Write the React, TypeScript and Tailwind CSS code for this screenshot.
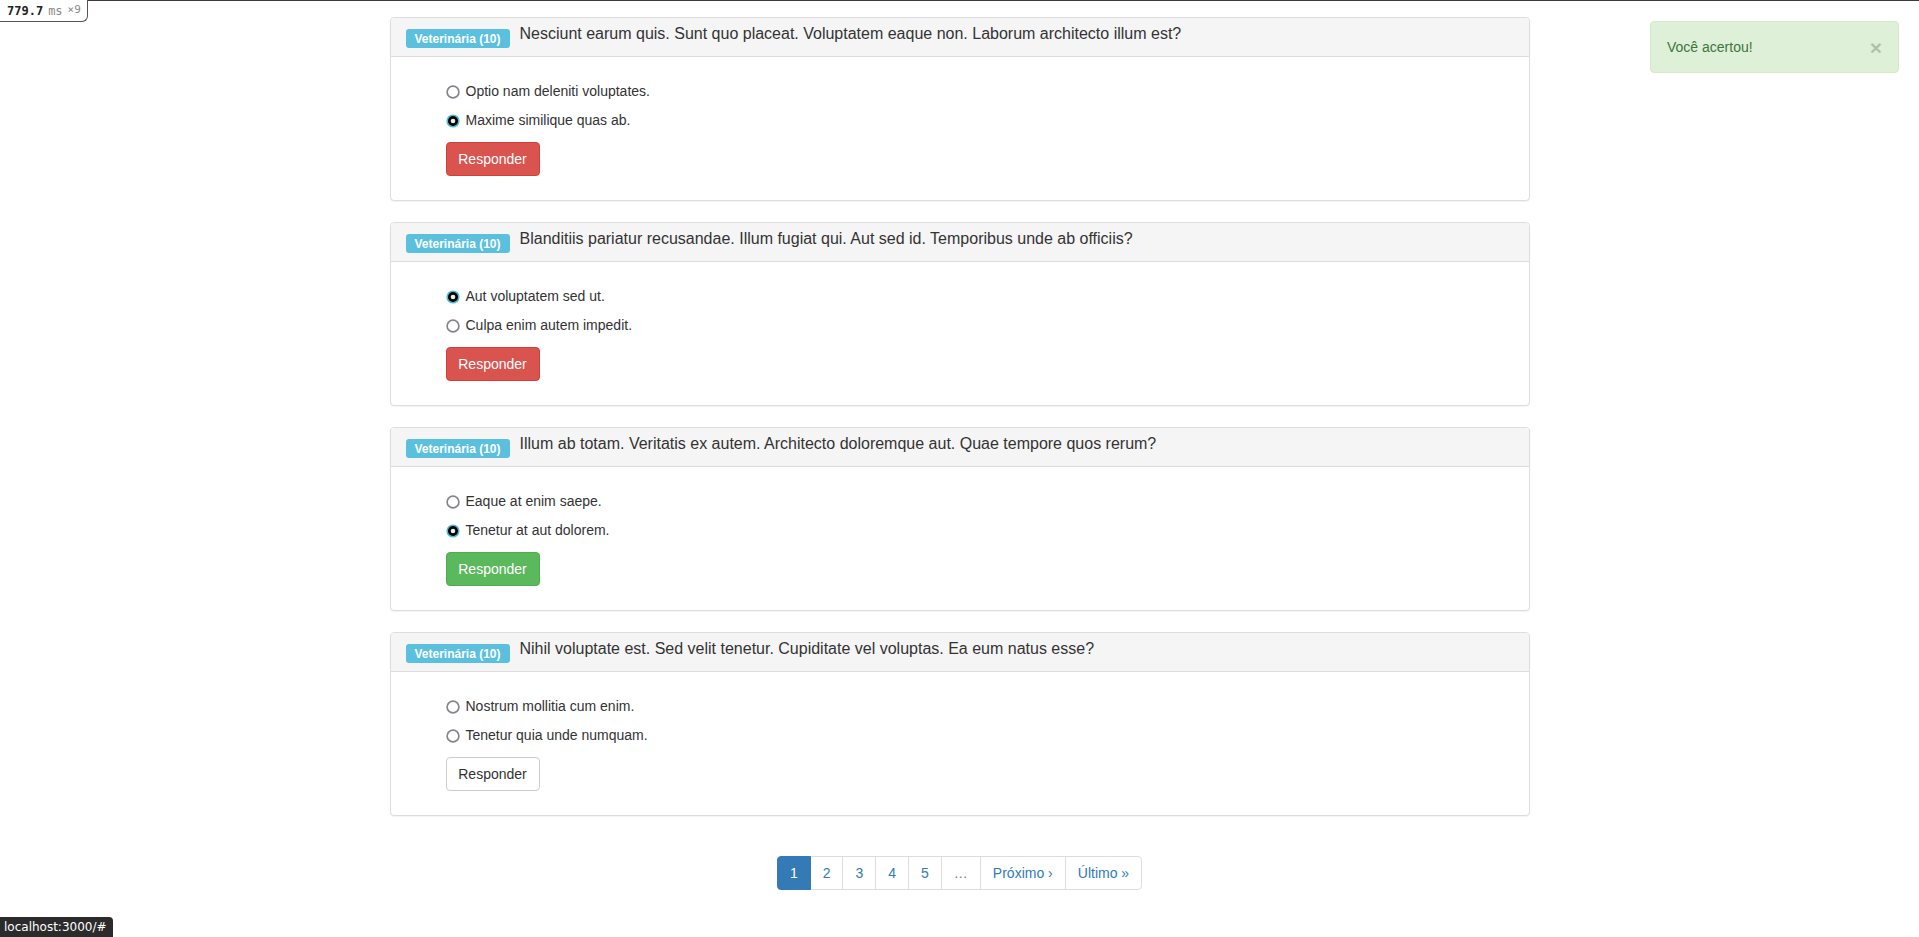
import React from "react";

type Question = {
  title: string;
  options: string[];
  checked: number | null;
  button: "danger" | "success" | "default";
};

const questions: Question[] = [
  {
    title: "Nesciunt earum quis. Sunt quo placeat. Voluptatem eaque non. Laborum architecto illum est?",
    options: ["Optio nam deleniti voluptates.", "Maxime similique quas ab."],
    checked: 1,
    button: "danger",
  },
  {
    title: "Blanditiis pariatur recusandae. Illum fugiat qui. Aut sed id. Temporibus unde ab officiis?",
    options: ["Aut voluptatem sed ut.", "Culpa enim autem impedit."],
    checked: 0,
    button: "danger",
  },
  {
    title: "Illum ab totam. Veritatis ex autem. Architecto doloremque aut. Quae tempore quos rerum?",
    options: ["Eaque at enim saepe.", "Tenetur at aut dolorem."],
    checked: 1,
    button: "success",
  },
  {
    title: "Nihil voluptate est. Sed velit tenetur. Cupiditate vel voluptas. Ea eum natus esse?",
    options: ["Nostrum mollitia cum enim.", "Tenetur quia unde numquam."],
    checked: null,
    button: "default",
  },
];

const buttonStyles = {
  danger: "bg-[#d9534f] border-[#d43f3a] text-white",
  success: "bg-[#5cb85c] border-[#4cae4c] text-white",
  default: "bg-white border-[#ccc] text-[#333]",
};

function Radio({ checked }: { checked: boolean }) {
  return (
    <svg width="14" height="14" viewBox="0 0 14 14" className="mt-[4px] shrink-0">
      {checked ? (
        <>
          <circle cx="7" cy="7" r="6.6" fill="#53bcd3" />
          <circle cx="7" cy="7" r="5" fill="#000" />
          <circle cx="7" cy="7" r="2.3" fill="#dff4f8" />
        </>
      ) : (
        <circle cx="7" cy="7" r="5.9" fill="#fff" stroke="#85858f" strokeWidth="1.7" />
      )}
    </svg>
  );
}

function QuestionPanel({ q }: { q: Question }) {
  return (
    <div className="mb-[21px] h-[184px] rounded-[4px] border border-[#ddd] bg-white shadow-[0_1px_1px_rgba(0,0,0,0.05)]">
      <div className="flex h-[39px] items-start gap-[10px] rounded-t-[3px] border-b border-[#ddd] bg-[#f5f5f5] px-[15px]">
        <span className="mt-[11px] flex h-[19px] w-[104px] items-center justify-center rounded-[3px] bg-[#5bc0de] text-[12px] font-bold leading-none text-white">
          Veterinária (10)
        </span>
        <h3 className="mt-[6px] text-[16px] leading-[20px] text-[#333]">{q.title}</h3>
      </div>
      <div className="pl-[55px] pt-[24px]">
        <div className="flex flex-col gap-[9px]">
          {q.options.map((opt, i) => (
            <label key={opt} className="flex h-[20px] items-start gap-[6px] leading-[20px]">
              <Radio checked={q.checked === i} />
              <span>{opt}</span>
            </label>
          ))}
        </div>
        <button
          className={`mt-[12px] h-[34px] w-[94px] rounded-[4px] border text-[14px] leading-[20px] ${buttonStyles[q.button]}`}
        >
          Responder
        </button>
      </div>
    </div>
  );
}

const pages = ["1", "2", "3", "4", "5", "…", "Próximo ›", "Último »"];

export default function App() {
  return (
    <div className="relative min-h-[937px] bg-white font-['Liberation_Sans',Arial,sans-serif] text-[14px] text-[#333]">
      <div className="absolute inset-x-0 top-0 h-px bg-[#3a3a3a]" />
      <div className="absolute left-0 top-0 flex h-[22px] w-[88px] items-center gap-[5px] rounded-br-[6px] border-b border-r border-[#555] bg-white pl-[7px] font-['DejaVu_Sans_Mono',monospace] text-[12px]">
        <span className="font-semibold text-[#222]">779.7</span>
        <span className="text-[#8a8a8a]">ms</span>
        <span className="text-[11px] text-[#8a8a8a]">×9</span>
      </div>

      <div className="absolute right-[20px] top-[21px] flex h-[52px] w-[249px] items-center justify-between rounded-[4px] border border-[#d6e9c6] bg-[#dff0d8] pl-[16px] pr-[16px] text-[#3c763d]">
        <span className="leading-[20px]">Você acertou!</span>
        <span className="text-[21px] font-bold leading-none text-black opacity-20">×</span>
      </div>

      <div className="mx-auto w-[1140px] pt-[17px]">
        {questions.map((q) => (
          <QuestionPanel key={q.title} q={q} />
        ))}
        <div className="mt-[40px] flex justify-center">
          <div className="flex">
            {pages.map((p, i) => (
              <a
                key={p}
                href="#"
                className={`-ml-px flex h-[34px] items-center border px-[12px] leading-[20px] first:ml-0 first:rounded-l-[4px] last:rounded-r-[4px] ${
                  i === 0
                    ? "z-10 border-[#337ab7] bg-[#337ab7] text-white"
                    : p === "…"
                      ? "border-[#ddd] bg-white text-[#777]"
                      : "border-[#ddd] bg-white text-[#337ab7]"
                }`}
              >
                {p}
              </a>
            ))}
          </div>
        </div>
      </div>

      <div className="fixed bottom-0 left-0 flex h-[20px] items-center rounded-tr-[4px] bg-[#2b2b2b] pl-[4px] pr-[6px] font-['DejaVu_Sans',sans-serif] text-[12px] text-white">
        localhost:3000/#
      </div>
    </div>
  );
}
